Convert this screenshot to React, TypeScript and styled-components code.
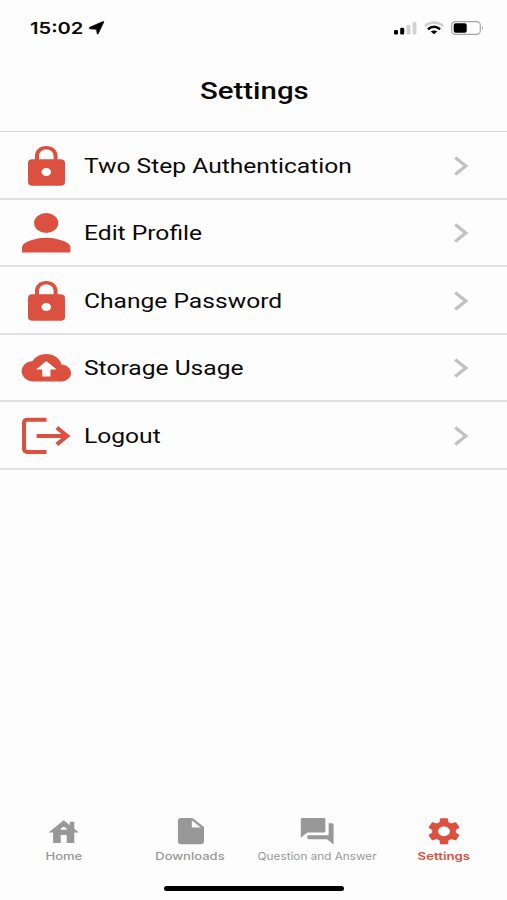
import React from "react";
import styled, { createGlobalStyle } from "styled-components";

const RED = "#dc5040";
const GREY = "#989898";

const GlobalStyle = createGlobalStyle`
  * { box-sizing: border-box; }
  body { margin: 0; background: #fdfdfd; }
`;

const Screen = styled.div`
  width: 100%;
  height: 900px;
  display: flex;
  flex-direction: column;
  background: #fdfdfd;
  color: #0a0a0a;
  font-family: Roboto, sans-serif;
  overflow: hidden;
`;

const StatusBar = styled.header`
  height: 55px;
  padding: 0 23px 0 30px;
  display: flex;
  align-items: center;
  justify-content: space-between;
`;

const StatusGroup = styled.div<{ $gap: number }>`
  display: flex;
  align-items: center;
  gap: ${(p) => p.$gap}px;
`;

const Clock = styled.div`
  width: 54px;
  font: 600 16.5px/20px Inter, sans-serif;
  transform: scaleX(1.22);
  transform-origin: left center;
  white-space: nowrap;
`;

const TitleBar = styled.div`
  height: 76px;
  display: flex;
  justify-content: center;
  padding: 20px 0 0 1px;
`;

const Title = styled.h1`
  margin: 0;
  font-size: 24.5px;
  font-weight: 500;
  line-height: 32px;
  transform: scaleX(1.2);
`;

const List = styled.ul`
  flex: 1;
  margin: 0;
  padding: 0;
  list-style: none;
  border-top: 1px solid #d6d6d6;
`;

const Row = styled.li`
  height: 67.5px;
  display: flex;
  align-items: center;
  padding: 1.7px 38px 0 21px;
  border-bottom: 2px solid #e1e1e1;
`;

const RowLabel = styled.span<{ $stretch: number }>`
  flex: 1;
  margin-left: 13px;
  font-size: 20.5px;
  line-height: 26px;
  white-space: nowrap;
  transform: scaleX(${(p) => p.$stretch});
  transform-origin: left center;
`;

const Icon = styled.svg`
  display: block;
  flex: none;
`;

const TabBar = styled.nav`
  height: 53px;
  display: grid;
  grid-template-columns: repeat(4, 1fr);
`;

const Tab = styled.div<{ $active?: boolean }>`
  display: flex;
  flex-direction: column;
  align-items: center;
  color: ${(p) => (p.$active ? RED : GREY)};
`;

const TabLabel = styled.span<{ $stretch: number; $weight: number }>`
  margin-top: 4px;
  font: ${(p) => p.$weight} 10.5px/14px Inter, sans-serif;
  white-space: nowrap;
  transform: scaleX(${(p) => p.$stretch});
`;

const HomeArea = styled.footer`
  height: 30px;
  display: flex;
  justify-content: center;
  padding: 16px 0 0 1px;
`;

const HomeIndicator = styled.div`
  width: 180px;
  height: 5px;
  border-radius: 3px;
  background: #000;
`;

const LocationArrow = () => (
  <Icon width="17" height="14" viewBox="0 0 17 14">
    <path d="M15.800 1 10.200 12.700Q9.300 13.700 9.100 12.300L8.600 8.300 2 7.800Q.3 7.200 1.700 6.300L14.600.7Q16.300.2 15.800 1Z" fill="#000" stroke="#000" strokeWidth=".7" />
  </Icon>
);

const Signal = () => (
  <Icon width="23" height="14" viewBox="0 0 23 14">
    <rect x="0" y="9" width="4" height="4.5" rx="1.2" />
    <rect x="6.2" y="6.8" width="4" height="6.7" rx="1.2" />
    <rect x="12.6" y="4" width="3.8" height="9.5" rx="1.2" fill="#d2d2d2" />
    <rect x="18.6" y="1" width="3.8" height="12.5" rx="1.2" fill="#d2d2d2" />
  </Icon>
);

const Wifi = () => (
  <Icon width="20" height="14" viewBox="0 0 20 14" fill="none" strokeWidth="2.2">
    <path d="M.8 5Q10-2 19.2 5" stroke="#cecece" />
    <path d="M3.9 8.2Q10 3.2 16.1 8.2" stroke="#000" strokeWidth="2.5" />
    <path d="M6.7 10.6Q10 8.4 13.3 10.6L10 13.2Z" fill="#000" />
  </Icon>
);

const Battery = () => (
  <Icon width="33" height="14" viewBox="0 0 33 14">
    <rect x=".7" y=".7" width="28.6" height="12.6" rx="3.6" fill="none" stroke="#a6a6a6" strokeWidth="1.2" />
    <rect x="2.7" y="2.3" width="13" height="9.4" rx="2" />
    <path d="M31 4.8q1.8 2 0 4.2z" fill="#999" />
  </Icon>
);

const LockIcon = () => (
  <Icon width="50" height="42" viewBox="0 0 50 42" fill={RED}>
    <path fillRule="evenodd" d="M11 14.2h3V11C14 5 18.8 1 25.3 1s11.3 4 11.3 10v3.2h3c2.6 0 4.4 1.5 4.4 3.6v19.4c0 2.1-1.8 3.6-4.4 3.6H11.4C8.800 40.800 7 39.300 7 37.200V17.800c0-2.100 1.600-3.600 4-3.600Zm7 0h14.600V11c0-3.800-3-6.500-7.300-6.500S18 7.200 18 11v3.200ZM25.300 23c-2.800 0-4.800 1.700-4.800 4s2 4 4.800 4 4.800-1.700 4.800-4-2-4-4.800-4Z" />
  </Icon>
);

const PersonIcon = () => (
  <Icon width="50" height="42" viewBox="0 0 50 42" fill={RED}>
    <ellipse cx="25.200" cy="11" rx="12.100" ry="10" />
    <path d="M1 40.600v-5C1 29 17 25.700 25.200 25.700S49.400 29 49.400 35.600v5Z" />
  </Icon>
);

const CloudIcon = () => (
  <Icon width="50" height="42" viewBox="0 0 50 42">
    <g transform="translate(.6 .2) scale(2.060 1.720)">
      <path fill={RED} d="M19.350 10.040C18.670 6.590 15.640 4 12 4 9.110 4 6.600 5.640 5.350 8.040 2.340 8.360 0 10.910 0 14c0 3.310 2.690 6 6 6h13c2.760 0 5-2.240 5-5 0-2.640-2.050-4.780-4.650-4.960zM14 13v4h-4v-4H7l5-5 5 5h-3z" />
    </g>
  </Icon>
);

const LogoutIcon = () => (
  <Icon width="50" height="42" viewBox="0 0 50 42" fill="none" stroke={RED} strokeWidth="4">
    <path d="M25.500 4.700H6.500Q3 4.700 3 8v25.500Q3 36.900 6.500 36.900h19" />
    <path d="M15.600 21H46" />
    <path d="M35.800 12.600 46.200 21l-10.400 8.400" strokeWidth="4" />
  </Icon>
);

const Chevron = () => (
  <Icon width="16" height="20" viewBox="0 0 16 20" fill="none" stroke="#c2c2c2" strokeWidth="3.3">
    <path d="M2.200 1.500 12.800 10 2.200 18.500" />
  </Icon>
);

const HomeIcon = () => (
  <Icon width="36" height="29" viewBox="0 0 36 29" fill="currentColor">
    <path transform="translate(.6 -.700) scale(1.510 1.340)" d="M19 9.300V4h-3v2.600L12 3 2 12h3v8h5v-6h4v6h5v-8h3l-3-2.700zm-9 .7c0-1.100.9-2 2-2s2 .9 2 2h-4z" />
  </Icon>
);

const FileIcon = () => (
  <Icon width="36" height="29" viewBox="0 0 36 29" fill="currentColor">
    <path fillRule="evenodd" d="M9 .9h11.500L32 9.900V24.500c0 1.600-1.300 2.700-3.200 2.700H9C7.100 27.200 5.900 26.100 5.900 24.500V3.600C5.900 2 7.100.9 9 .9Zm10.800 2.300v7.200h9Z" />
  </Icon>
);

const ChatIcon = () => (
  <Icon width="36" height="29" viewBox="0 0 36 29" fill="currentColor">
    <path transform="translate(-1.500 -1.600) scale(1.640 1.320)" d="M21 6h-2v9H6v2c0 .55.450 1 1 1h11l4 4V7c0-.55-.450-1-1-1zm-4 6V3c0-.55-.450-1-1-1H3c-.55 0-1 .450-1 1v14l4-4h10c.55 0 1-.450 1-1z" />
  </Icon>
);

const GearIcon = () => (
  <Icon width="36" height="29" viewBox="0 0 36 29" fill="currentColor">
    <path transform="translate(-1.800 -1.900) scale(1.650 1.350)" d="M19.140 12.940c.04-.3.060-.61.060-.94 0-.32-.02-.64-.07-.94l2.030-1.580c.18-.14.230-.41.120-.61l-1.920-3.320c-.12-.22-.37-.29-.59-.22l-2.390.96c-.5-.38-1.030-.7-1.620-.94l-.36-2.540c-.04-.24-.24-.41-.48-.41h-3.840c-.24 0-.43.17-.47.41l-.36 2.540c-.59.24-1.130.57-1.620.94l-2.390-.96c-.22-.08-.47 0-.59.22L2.740 8.870c-.12.21-.08.470.12.610l2.030 1.580c-.05.300-.09.630-.09.940s.02.640.07.940l-2.030 1.580c-.18.140-.23.410-.12.610l1.920 3.320c.12.220.37.290.59.220l2.390-.96c.5.380 1.030.700 1.620.940l.36 2.540c.05.240.24.410.48.410h3.840c.24 0 .44-.17.470-.41l.36-2.540c.59-.24 1.130-.56 1.620-.94l2.390.96c.22.080.47 0 .59-.22l1.920-3.320c.12-.22.07-.47-.12-.61l-2.010-1.580zM12 15.600c-1.980 0-3.600-1.620-3.600-3.600s1.620-3.600 3.600-3.600 3.600 1.620 3.600 3.600-1.620 3.600-3.600 3.600z" />
  </Icon>
);

const rows = [
  { label: "Two Step Authentication", Glyph: LockIcon, stretch: 1.2 },
  { label: "Edit Profile", Glyph: PersonIcon, stretch: 1.2 },
  { label: "Change Password", Glyph: LockIcon, stretch: 1.2 },
  { label: "Storage Usage", Glyph: CloudIcon, stretch: 1.2 },
  { label: "Logout", Glyph: LogoutIcon, stretch: 1.2 },
];

const tabs = [
  { label: "Home", Glyph: HomeIcon, stretch: 1.24, weight: 500 },
  { label: "Downloads", Glyph: FileIcon, stretch: 1.24, weight: 500 },
  { label: "Question and Answer", Glyph: ChatIcon, stretch: 1.12, weight: 400 },
  { label: "Settings", Glyph: GearIcon, stretch: 1.26, weight: 600, active: true },
];

export default function App() {
  return (
    <>
      <GlobalStyle />
      <Screen>
        <StatusBar>
          <StatusGroup $gap={4}>
            <Clock>15:02</Clock>
            <LocationArrow />
          </StatusGroup>
          <StatusGroup $gap={7}>
            <Signal />
            <Wifi />
            <Battery />
          </StatusGroup>
        </StatusBar>
        <TitleBar>
          <Title>Settings</Title>
        </TitleBar>
        <List>
          {rows.map(({ label, Glyph, stretch }) => (
            <Row key={label}>
              <Glyph />
              <RowLabel $stretch={stretch}>{label}</RowLabel>
              <Chevron />
            </Row>
          ))}
        </List>
        <TabBar>
          {tabs.map(({ label, Glyph, stretch, weight, active }) => (
            <Tab key={label} $active={active}>
              <Glyph />
              <TabLabel $stretch={stretch} $weight={weight}>
                {label}
              </TabLabel>
            </Tab>
          ))}
        </TabBar>
        <HomeArea>
          <HomeIndicator />
        </HomeArea>
      </Screen>
    </>
  );
}
